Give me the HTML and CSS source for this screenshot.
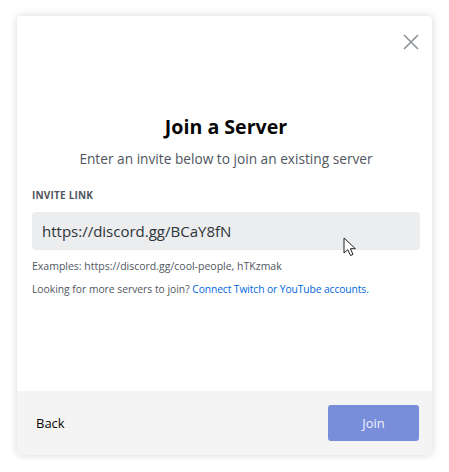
FILE: index.html
```html
<!DOCTYPE html>
<html lang="en">

<head>
  <meta charset="UTF-8">
  <meta name="viewport" content="width=device-width, initial-scale=1.0">
  <title>Join a Server</title>
  <link rel="stylesheet" href="styles.css">
</head>

<body>
  <div class="modal">
    <div class="modal-body">
      <button class="close-btn" aria-label="Close">
        <svg width="16" height="16" viewBox="0 0 16 16">
          <path d="M1 1L15 15M15 1L1 15" stroke="#8e9297" stroke-width="1.6" fill="none" />
        </svg>
      </button>
      <h2>Join a Server</h2>
      <p class="subtitle">Enter an invite below to join an existing server</p>

      <label class="field-label">INVITE LINK</label>
      <div class="invite-input">
        <span>https://discord.gg/BCaY8fN</span>
        <svg class="cursor" width="15" height="21" viewBox="0 0 15 21">
          <path d="M1 1L1 16L4.8 12.6L7.5 18.5L10 17.4L7.4 11.7L12.4 11.7Z" fill="#fff" stroke="#222" stroke-width="1" stroke-linejoin="round" />
        </svg>
      </div>
      <p class="hint">Examples: https://discord.gg/cool-people, hTKzmak</p>
      <p class="hint">Looking for more servers to join? <a href="#">Connect Twitch or YouTube accounts.</a></p>
    </div>
    <div class="modal-footer">
      <button class="back-btn">Back</button>
      <button class="join-btn">Join</button>
    </div>
  </div>
</body>

</html>
```

FILE: styles.css
```css
body {
  font-family: "Open Sans", Arial, sans-serif;
  background-color: #fff;
  margin: 0;
  padding: 16px 17px;
}

.modal {
  width: 415px;
  background: #fff;
  border-radius: 4px;
  box-shadow: 0 0 8px rgba(0, 0, 0, 0.16);
  overflow: hidden;
}

.modal-body {
  position: relative;
  padding: 97px 12px 95px 15px;
  display: flex;
  flex-direction: column;
}

.close-btn {
  position: absolute;
  top: 18px;
  right: 13px;
  border: none;
  background: none;
  padding: 0;
  cursor: pointer;
}

h2 {
  margin: 0;
  text-align: center;
  font-size: 19.6px;
  font-weight: 700;
  color: #060607;
  line-height: 28px;
}

.subtitle {
  margin: 8px 0 0;
  text-align: center;
  font-size: 13.7px;
  color: #4f5660;
  line-height: 20px;
}

.field-label {
  margin-top: 19px;
  font-size: 10px;
  font-weight: 700;
  color: #4f5660;
  letter-spacing: 0.2px;
  line-height: 14px;
}

.invite-input {
  margin-top: 10px;
  height: 38px;
  background: #ebedef;
  border-radius: 4px;
  display: flex;
  align-items: center;
  padding: 0 10px;
  font-size: 15px;
  color: #2e3338;
}

.invite-input .cursor {
  align-self: flex-start;
  margin-left: auto;
  margin-right: 52px;
  margin-top: 25px;
  margin-bottom: -8px;
}

.hint {
  margin: 9px 0 0;
  font-size: 10.5px;
  color: #4f5660;
  line-height: 14px;
}

.hint + .hint {
  margin-top: 9px;
  font-size: 10.3px;
}

.hint a {
  color: #0068e0;
  text-decoration: none;
  letter-spacing: -0.1px;
}

.modal-footer {
  background: #f4f4f4;
  height: 64px;
  display: flex;
  align-items: center;
  justify-content: space-between;
  padding: 0 13px 0 19px;
}

.back-btn {
  border: none;
  background: none;
  padding: 0;
  font-family: inherit;
  font-size: 13px;
  color: #060607;
  cursor: pointer;
}

.join-btn {
  width: 91px;
  height: 36px;
  border: none;
  border-radius: 3px;
  background: #7289da;
  opacity: 0.95;
  color: #f0f2fb;
  font-family: inherit;
  font-size: 13px;
  cursor: pointer;
}
```
